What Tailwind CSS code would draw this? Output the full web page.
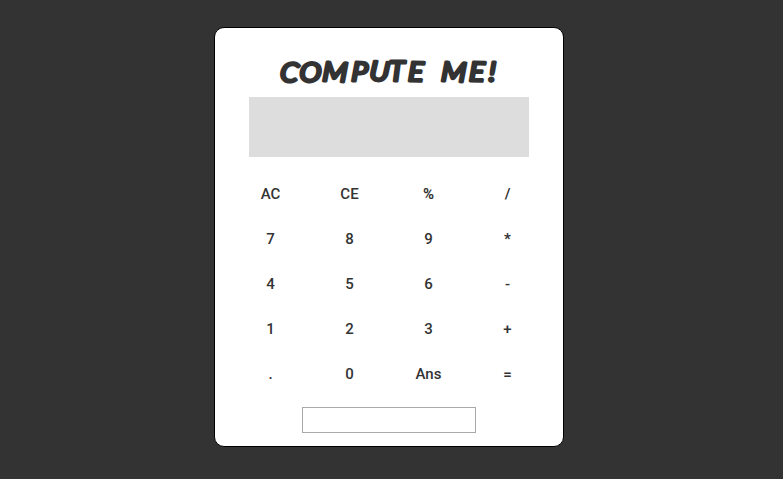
<!DOCTYPE html>
<html lang="en"><head><meta charset="utf-8"><title>Compute me!</title>
<script src="https://cdn.jsdelivr.net/npm/@tailwindcss/browser@4"></script></head>
<body class="bg-[#333] h-[479px] overflow-hidden pt-[27px] pl-[214px] font-[Roboto,sans-serif] text-[#333]">
<main class="w-[350px] h-[420px] bg-white border border-black rounded-[10px] flex flex-col items-center">
<h1 class="h-[69px] w-[280px]">
<svg class="block w-[280px] h-[69px] overflow-visible fill-[#333] stroke-[#333] stroke-[2.8px] [stroke-linejoin:round] font-[Lato,sans-serif] font-normal italic text-[27px]" viewBox="0 0 280 69"><text transform="scale(1.08 1)" y="53 53 53 53 52 53 53 53 53 53 53" x="28 46 67.5 94.5 111 129.5 147 165 177.5 203.5 221.5" rotate="6 5 3 3 5 0 2 0 3 2 2">COMPUTE ME!</text></svg></h1>
<div class="w-[280px] h-[60px] bg-[#ddd]"></div>
<div class="mt-[15px] w-[316px] grid grid-cols-4 auto-rows-[45px] place-items-center text-[15px] font-medium">
<button>AC</button><button>CE</button><button class="font-bold">%</button><button class="font-semibold">/</button>
<button>7</button><button>8</button><button>9</button><button class="font-bold">*</button>
<button>4</button><button>5</button><button>6</button><button>-</button>
<button>1</button><button>2</button><button>3</button><button>+</button>
<button>.</button><button>0</button><button>Ans</button><button class="font-semibold">=</button>
</div>
<div class="mt-[10px] w-[174px] h-[26px] border border-[#a9a9a9]"></div>
</main></body></html>
